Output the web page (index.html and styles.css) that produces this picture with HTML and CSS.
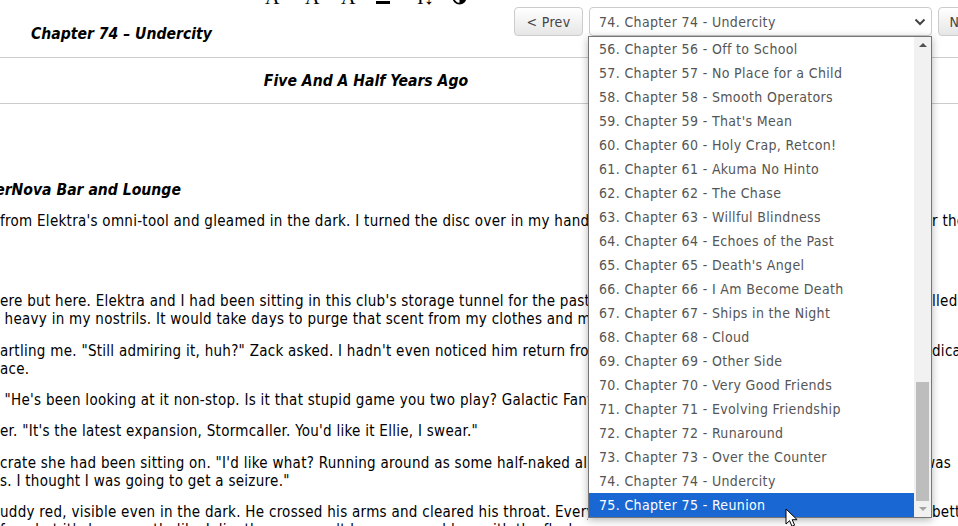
FILE: index.html
```html
<!DOCTYPE html>
<html lang="en">
<head>
    <meta charset="UTF-8">
    <title>Chapter 74 - Undercity</title>
    <link rel="stylesheet" href="styles.css">
</head>
<body>
<div class="page">
    <div class="toolbar">
        <div class="tools">
            <span class="tool">A<sup class="plus">+</sup></span>
            <span class="tool">A</span>
            <span class="tool">A</span>
            <span class="toolBar"></span>
            <span class="tool">I↕</span>
            <svg class="toolContrast" width="15" height="15" viewBox="0 0 16 16">
                <circle cx="8" cy="8" r="6.5" fill="#fff" stroke="#000" stroke-width="2"/>
                <path d="M8 1.5a6.5 6.5 0 0 1 0 13z" fill="#000"/>
            </svg>
        </div>
        <div class="titleRow">
            <h2 class="chapterTitle">Chapter 74 – Undercity</h2>
            <div class="nav">
                <button class="navBtn">&lt; Prev</button>
                <div class="selectBox">
                    <span>74. Chapter 74 - Undercity</span>
                    <svg width="12" height="8" viewBox="0 0 12 8"><path d="M1.5 1.5 6 6l4.5-4.5" fill="none" stroke="#444" stroke-width="2"/></svg>
                </div>
                <button class="navBtn">Next &gt;</button>
            </div>
        </div>
    </div>
    <h3 class="sceneTitle">Five And A Half Years Ago</h3>
    <div class="story">
        <p class="place">SuperNova Bar and Lounge</p>
        <p class="para"><span>from Elektra's omni-tool and gleamed in the dark. I turned the disc over in my hand</span><span class="tail">r the</span></p>
        <div class="blank"></div>
        <p class="para"><span>ere but here. Elektra and I had been sitting in this club's storage tunnel for the past</span><span class="tail">lled</span></p>
        <p class="para gapless"><span>&nbsp;heavy in my nostrils. It would take days to purge that scent from my clothes and my</span></p>
        <p class="para"><span>artling me. "Still admiring it, huh?" Zack asked. I hadn't even noticed him return from</span><span class="tail">dica</span></p>
        <p class="para gapless"><span>ace.</span></p>
        <p class="para"><span>&nbsp;"He's been looking at it non-stop. Is it that stupid game you two play? Galactic Fantasy</span></p>
        <p class="para"><span>er. "It's the latest expansion, Stormcaller. You'd like it Ellie, I swear."</span></p>
        <p class="para"><span>crate she had been sitting on. "I'd like what? Running around as some half-naked alien</span><span class="tail tailWas">was</span></p>
        <p class="para gapless"><span>s. I thought I was going to get a seizure."</span></p>
        <p class="para"><span>uddy red, visible even in the dark. He crossed his arms and cleared his throat. Every</span><span class="tail">bette</span></p>
        <p class="para gapless"><span>for what it's been worth, like Julia, then you can't have any problem with the flashes. He</span></p>
    </div>

    <div class="dropdown">
        <ul class="options">
            <li>56. Chapter 56 - Off to School</li>
            <li>57. Chapter 57 - No Place for a Child</li>
            <li>58. Chapter 58 - Smooth Operators</li>
            <li>59. Chapter 59 - That's Mean</li>
            <li>60. Chapter 60 - Holy Crap, Retcon!</li>
            <li>61. Chapter 61 - Akuma No Hinto</li>
            <li>62. Chapter 62 - The Chase</li>
            <li>63. Chapter 63 - Willful Blindness</li>
            <li>64. Chapter 64 - Echoes of the Past</li>
            <li>65. Chapter 65 - Death's Angel</li>
            <li>66. Chapter 66 - I Am Become Death</li>
            <li>67. Chapter 67 - Ships in the Night</li>
            <li>68. Chapter 68 - Cloud</li>
            <li>69. Chapter 69 - Other Side</li>
            <li>70. Chapter 70 - Very Good Friends</li>
            <li>71. Chapter 71 - Evolving Friendship</li>
            <li>72. Chapter 72 - Runaround</li>
            <li>73. Chapter 73 - Over the Counter</li>
            <li>74. Chapter 74 - Undercity</li>
            <li class="selected">75. Chapter 75 - Reunion</li>
        </ul>
        <div class="scrollbar">
            <span class="arrowUp"></span>
            <div class="track"><div class="thumb"></div></div>
            <span class="arrowDown"></span>
        </div>
    </div>

    <svg class="cursor" width="14" height="20" viewBox="0 0 14 20">
        <path d="M1 1v15l3.6-3.3 2.4 5.6 2.6-1.1-2.4-5.5h4.9z" fill="#fff" stroke="#000" stroke-width="1"/>
    </svg>
</div>
</body>
</html>
```

FILE: styles.css
```css
* {
    padding: 0;
    margin: 0;
    box-sizing: border-box;
}
html, body {
    height: 100%;
    overflow: hidden;
    background: #fff;
}
body {
    font-family: "DejaVu Sans Condensed", "DejaVu Sans", sans-serif;
    font-size: 15px;
    letter-spacing: .28px;
    color: #000;
}
.page {
    position: relative;
    width: 958px;
    height: 526px;
    overflow: hidden;
}
.toolbar {
    height: 58px;
    border-bottom: 1px solid #ccc;
    position: relative;
}
.tools {
    position: absolute;
    top: -12px;
    left: 265px;
    display: grid;
    grid-template-columns: 40px 36px 35px 41px 35px 15px;
    align-items: end;
    height: 18px;
    font-family: "Liberation Serif", serif;
    font-size: 20px;
    line-height: 18px;
    letter-spacing: 0;
}
.plus {
    font-size: 11px;
    line-height: 0;
    margin-left: 1px;
}
.toolBar {
    width: 14px;
    height: 3px;
    background: #000;
    margin-bottom: 2px;
}
.toolContrast {
    margin-bottom: 1px;
}
.titleRow {
    display: flex;
    justify-content: space-between;
    padding: 7px 0 0 31px;
}
.chapterTitle {
    font-size: 15.6px;
    font-style: italic;
    letter-spacing: 0;
    padding-top: 18px;
    line-height: 18px;
}
.nav {
    display: flex;
    gap: 6px;
    width: 444px;
    flex-shrink: 0;
}
.navBtn {
    font: inherit;
    font-size: 14px;
    letter-spacing: .35px;
    color: #444;
    width: 69px;
    height: 29px;
    background: linear-gradient(#fff, #e6e6e6);
    border: 1px solid #ccc;
    border-radius: 4px;
    flex-shrink: 0;
}
.selectBox {
    font-size: 14px;
    letter-spacing: .35px;
    color: #555;
    width: 343px;
    height: 29px;
    border: 1px solid #ccc;
    border-radius: 4px;
    padding: 0 5px 0 9px;
    display: flex;
    align-items: center;
    justify-content: space-between;
    flex-shrink: 0;
}
.sceneTitle {
    height: 46px;
    line-height: 47px;
    font-size: 15.6px;
    font-style: italic;
    letter-spacing: 0;
    text-align: center;
    border-bottom: 1px solid #ccc;
    width: 100%;
    padding-right: 226px;
}
.story {
    padding-top: 77px;
}
.place {
    font-weight: bold;
    font-style: italic;
    font-size: 15.6px;
    letter-spacing: 0;
    line-height: 18px;
    margin: 0 0 .67px -35px;
}
.para {
    display: flex;
    justify-content: space-between;
    white-space: nowrap;
    line-height: 18px;
    margin-top: 13.33px;
}
.para > span:first-child {
    overflow: hidden;
    max-width: 588px;
}
.gapless {
    margin-top: 0;
}
.blank {
    height: 48.67px;
}
.tail {
    width: 26px;
    flex-shrink: 0;
    overflow: hidden;
}
.tailWas {
    text-indent: -8px;
}
.dropdown {
    position: absolute;
    left: 588px;
    top: 36px;
    width: 344px;
    height: 482px;
    background: #fff;
    border: 1px solid #767676;
    box-shadow: 0 2px 8px rgba(0, 0, 0, .3);
    display: flex;
    font-size: 14px;
    letter-spacing: .35px;
    color: #555;
}
.options {
    list-style: none;
    flex: 1;
}
.options li {
    height: 24px;
    line-height: 25px;
    padding-left: 10px;
}
.options .selected {
    background: #1967d2;
    color: #fff;
}
.scrollbar {
    width: 17px;
    background: #f1f1f1;
    display: flex;
    flex-direction: column;
    align-items: center;
}
.arrowUp, .arrowDown {
    width: 0;
    height: 0;
    border-left: 4px solid transparent;
    border-right: 4px solid transparent;
    margin: 6px 0;
}
.arrowUp {
    border-bottom: 4px solid #505050;
}
.arrowDown {
    border-top: 4px solid #a3a3a3;
}
.track {
    flex: 1;
    width: 100%;
    padding: 0 2px;
    display: flex;
    align-items: flex-end;
}
.thumb {
    width: 100%;
    height: 119px;
    background: #bdbdbd;
}
.cursor {
    position: absolute;
    left: 785px;
    top: 508px;
}
```
